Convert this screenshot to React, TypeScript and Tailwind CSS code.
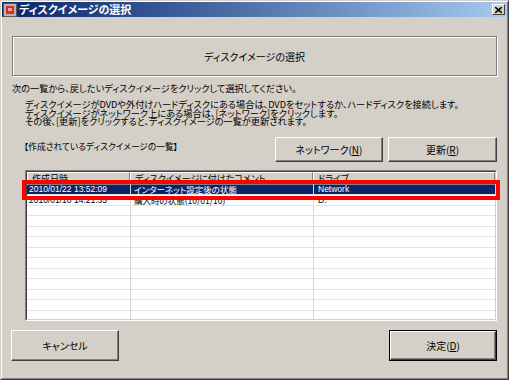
import { useState } from "react";

const JP = "font-['Noto_Sans_CJK_JP','Noto_Sans_CJK_SC',sans-serif]";

const ROWS = [
    { date: "2010/01/22 13:52:09", comment: "インターネット設定後の状態", drive: "Network" },
    { date: "2010/01/10 14:21:35", comment: "購入時の状態(10/01/10)", drive: "D:" },
];

const BLANK_ROWS = 11;

function WinButton({ children, def, className }: { children: React.ReactNode; def?: boolean; className?: string }) {
    return (
        <div className={`${def ? "border border-black" : ""} ${className ?? ""}`}>
            <div className="h-full flex items-center justify-center border border-t-white border-l-white border-r-[#404040] border-b-[#404040] shadow-[inset_-1px_-1px_0_#808080] bg-[#d4d0c8] text-[10px] text-black [font-feature-settings:'palt']">
                {children}
            </div>
        </div>
    );
}

export default function App() {
    const [selected, setSelected] = useState(0);

    return (
        <div className={`w-[509px] h-[380px] bg-[#d4d0c8] border border-[#d4d0c8] border-r-[#404040] border-b-[#404040] ${JP}`}>
            <div className="h-full flex flex-col border border-white border-r-[#808080] border-b-[#808080]">
                {/* title bar */}
                <div className="h-[15px] flex items-center bg-gradient-to-r from-[#0a246a] to-[#a6caf0] pl-[1px] pr-[2px]">
                    <svg width="14" height="14" viewBox="0 0 14 14">
                        <rect x="0.5" y="0.5" width="13" height="13" fill="#b8b4ac" stroke="#5a5650" />
                        <rect x="3" y="3" width="8" height="8" fill="#d0302a" />
                        <rect x="5" y="5" width="4" height="3" fill="#f0a090" />
                    </svg>
                    <span className="ml-[2px] text-[11px] font-bold text-white leading-none [font-feature-settings:'palt']">ディスクイメージの選択</span>
                    <div className="flex-1" />
                    <div className="w-[13px] h-[11px] flex items-center justify-center bg-[#d4d0c8] border border-t-white border-l-white border-r-[#404040] border-b-[#404040]">
                        <svg width="7" height="6" viewBox="0 0 7 6">
                            <path d="M0 0 L7 6 M7 0 L0 6" stroke="#000" strokeWidth="1.6" />
                        </svg>
                    </div>
                </div>

                {/* body */}
                <div className="flex-1 flex flex-col pl-[10px] pr-[10px]">
                    <div className="mt-[19px] h-[40px] flex items-center justify-center border border-[#808080] shadow-[inset_1px_1px_0_#fff,1px_1px_0_#fff] text-[10px] text-black [font-feature-settings:'palt']">
                        ディスクイメージの選択
                    </div>

                    <div className="mt-[6px] text-[9.2px] leading-[12px] text-black whitespace-nowrap [font-feature-settings:'palt']">
                        次の一覧から、戻したいディスクイメージをクリックして選択してください。
                    </div>

                    <div className="mt-[6px] ml-[13px] text-[9.2px] leading-[8.5px] text-black whitespace-nowrap [font-feature-settings:'palt']">
                        <div>ディスクイメージがDVDや外付けハードディスクにある場合は、DVDをセットするか、ハードディスクを接続します。</div>
                        <div>ディスクイメージがネットワーク上にある場合は、[ネットワーク]をクリックします。</div>
                        <div>その後、[更新]をクリックすると、ディスクイメージの一覧が更新されます。</div>
                    </div>

                    <div className="mt-[11px] ml-[12px] flex items-center">
                        <span className="mb-[4px] text-[8.7px] text-black [font-feature-settings:'palt']">【作成されているディスクイメージの一覧】</span>
                        <div className="flex-1" />
                        <WinButton className="w-[108px] h-[25px]">ネットワーク(<u>N</u>)</WinButton>
                        <WinButton className="ml-[5px] w-[109px] h-[25px]">更新(<u>R</u>)</WinButton>
                    </div>

                    {/* list */}
                    <div className="relative mt-[8px] ml-[13px] h-[151px] border border-t-[#808080] border-l-[#808080] border-r-white border-b-white">
                        <div className="h-full border border-t-[#404040] border-l-[#404040] border-r-[#d4d0c8] border-b-[#d4d0c8] bg-white overflow-hidden">
                            <div className="flex h-[13px] text-[9px] leading-none text-black [font-feature-settings:'palt']">
                                {[["作成日時", "w-[103px]"], ["ディスクイメージに付けたコメント", "w-[183px]"], ["ドライブ", "flex-1"]].map(([t, w]) => (
                                    <div key={t} className={`${w} flex items-center pl-[4px] bg-[#d4d0c8] border border-t-white border-l-white border-r-[#808080] border-b-[#808080]`}>{t}</div>
                                ))}
                            </div>
                            {ROWS.map((r, i) => (
                                <div
                                    key={i}
                                    onClick={() => setSelected(i)}
                                    className={`flex h-[10.5px] text-[8.5px] leading-none [font-feature-settings:'palt'] ${selected === i ? "bg-[#0a246a] text-white" : "text-black"} border-b border-[#e4e2dc]`}
                                >
                                    <div className="w-[103px] pl-[2px] flex items-center font-['Liberation_Sans',sans-serif]">{r.date}</div>
                                    <div className="w-[183px] pl-[3px] flex items-center border-l border-[#d8d6d0]">{r.comment}</div>
                                    <div className="flex-1 pl-[4px] flex items-center border-l border-[#d8d6d0] font-['Liberation_Sans',sans-serif]">{r.drive}</div>
                                </div>
                            ))}
                            {Array.from({ length: BLANK_ROWS }).map((_, i) => (
                                <div key={i} className="flex h-[10.5px] border-b border-[#e4e2dc]">
                                    <div className="w-[103px]" />
                                    <div className="w-[183px] border-l border-[#d8d6d0]" />
                                    <div className="flex-1 border-l border-[#d8d6d0]" />
                                </div>
                            ))}
                        </div>
                        {/* highlight frame */}
                        <div className="absolute left-[-4px] right-[-4px] top-[9px] h-[20px] border-[4px] border-[#ff0000] pointer-events-none" />
                    </div>

                    <div className="mt-[9px] flex">
                        <WinButton className="ml-[-1px] w-[108px] h-[31px]">キャンセル</WinButton>
                        <div className="flex-1" />
                        <WinButton def className="w-[108px] h-[31px]">決定(<u>D</u>)</WinButton>
                    </div>
                </div>
            </div>
        </div>
    );
}
